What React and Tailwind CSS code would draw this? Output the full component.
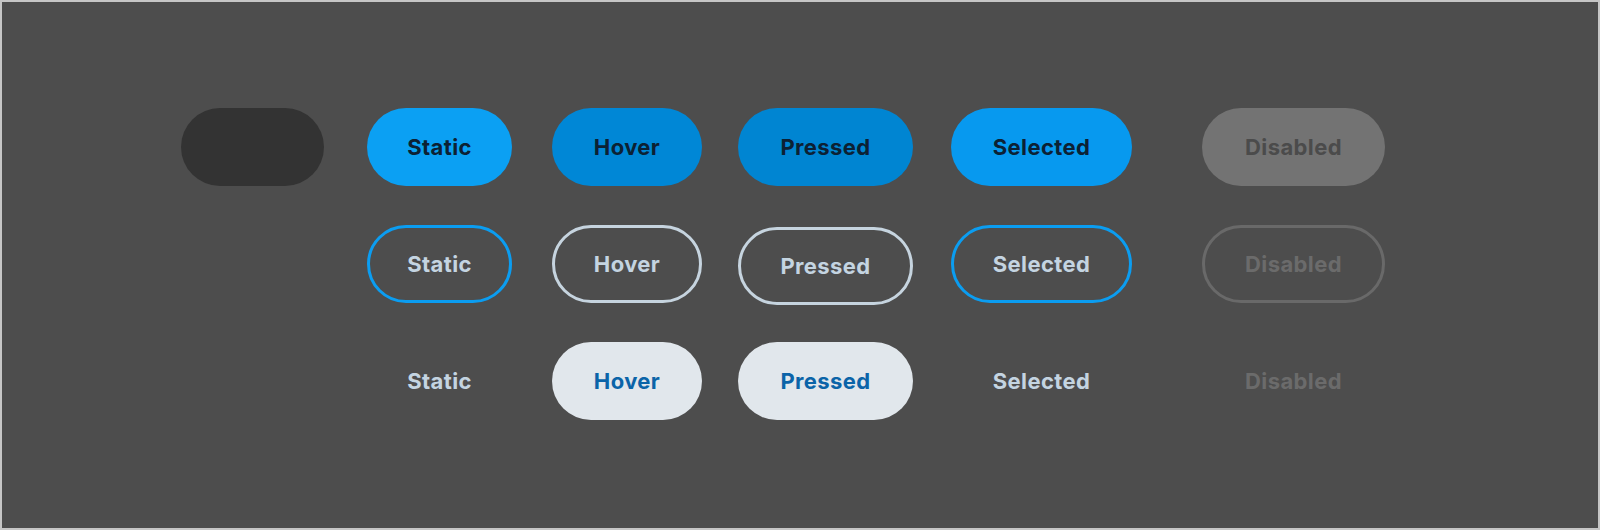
const font = { fontFamily: 'Inter, Lato, sans-serif' };

const filled = [
  { label: 'Static', w: 'w-[145px] ml-[43px]', cls: 'bg-[#0ba0f3] text-[#0c2134]' },
  { label: 'Hover', w: 'w-[150px] ml-[40px]', cls: 'bg-[#0087d6] text-[#0c2134]' },
  { label: 'Pressed', w: 'w-[175px] ml-[36px]', cls: 'bg-[#0085d2] text-[#0c2134]' },
  { label: 'Selected', w: 'w-[181px] ml-[38px]', cls: 'bg-[#0799ef] text-[#0c2134]' },
];

const outlined = [
  { label: 'Static', w: 'w-[145px] ml-[43px]', cls: 'border-[3px] border-[#0b9df1] text-[#c4d4e1]' },
  { label: 'Hover', w: 'w-[150px] ml-[40px]', cls: 'border-[3px] border-[#c6d4df] text-[#c4d4e1]' },
  { label: 'Pressed', w: 'w-[175px] ml-[36px]', cls: 'border-[3px] border-[#c6d4df] text-[#c4d4e1] translate-y-[2px]' },
  { label: 'Selected', w: 'w-[181px] ml-[38px]', cls: 'border-[3px] border-[#0b9df1] text-[#c4d4e1]' },
];

const ghost = [
  { label: 'Static', w: 'w-[145px] ml-[43px]', cls: 'text-[#c4d4e1]' },
  { label: 'Hover', w: 'w-[150px] ml-[40px]', cls: 'bg-[#e1e7ec] text-[#0b64a8]' },
  { label: 'Pressed', w: 'w-[175px] ml-[36px]', cls: 'bg-[#e1e7ec] text-[#0b64a8]' },
  { label: 'Selected', w: 'w-[181px] ml-[38px]', cls: 'text-[#c4d4e1]' },
];

const Pill = ({ label, w, cls }) => (
  <div className={`${w} h-[78px] shrink-0 rounded-full flex items-center justify-center text-[22px] font-bold tracking-[0.4px] ${cls}`}>
    {label}
  </div>
);

const Row = ({ first, items, disabled }) => (
  <div className="flex items-center">
    <div className="w-[143px] h-[78px] shrink-0">{first}</div>
    {items.map((it) => (
      <Pill key={it.label} {...it} />
    ))}
    <Pill label="Disabled" w="w-[183px] ml-[70px]" cls={disabled} />
  </div>
);

export default function App() {
  return (
    <div className="w-[1600px] h-[530px] bg-[#4d4d4d] border-2 border-[#c6c6c6]" style={font}>
      <div className="pl-[179px] pt-[106px] flex flex-col gap-[39px]">
        <Row
          first={<div className="w-full h-full rounded-full bg-[#333333]" />}
          items={filled}
          disabled="bg-[#737373] text-[#4b4b4b]"
        />
        <Row items={outlined} disabled="border-[3px] border-[#696969] text-[#6b6b6b]" />
        <Row items={ghost} disabled="text-[#6b6b6b]" />
      </div>
    </div>
  );
}
